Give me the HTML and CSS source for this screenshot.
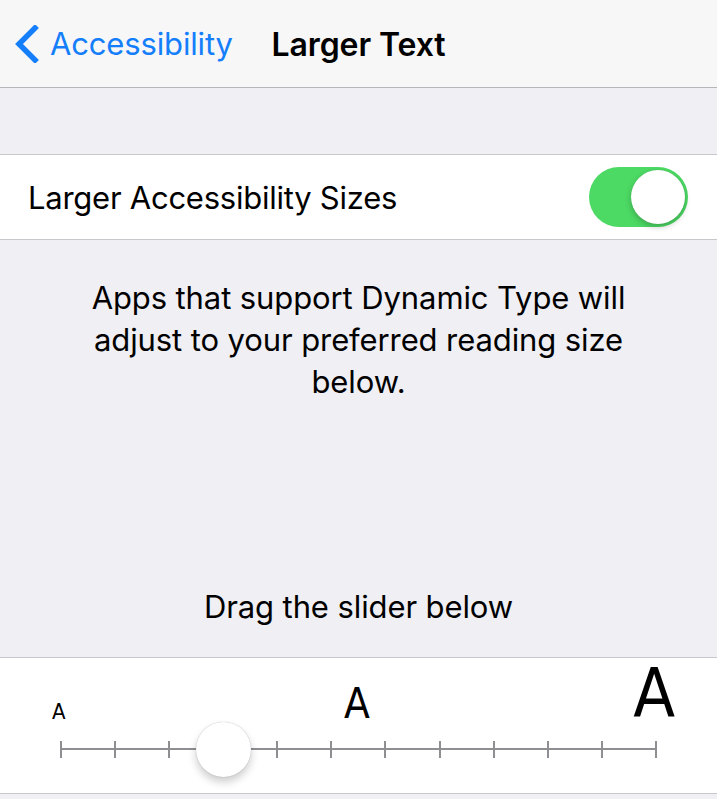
FILE: index.html
```html
<!DOCTYPE html>
<html lang="en">
<head>
<meta charset="utf-8">
<title>Larger Text</title>
<link rel="stylesheet" href="styles.css">
</head>
<body>
<header class="navbar">
  <a class="back" href="#">
    <svg class="chevron" width="26" height="38" viewBox="0 0 26 38"><path d="M22 3 L6 19 L22 35" fill="none" stroke="#157efb" stroke-width="5.5" stroke-linecap="square" stroke-linejoin="miter"/></svg>
    <span>Accessibility</span>
  </a>
  <h1 class="title">Larger Text</h1>
</header>

<div class="spacer"></div>

<section class="group">
  <div class="row">
    <span class="row-label">Larger Accessibility Sizes</span>
    <div class="switch on"><div class="knob"></div></div>
  </div>
</section>

<p class="note">Apps that support Dynamic Type will adjust to your preferred reading size below.</p>

<p class="hint">Drag the slider below</p>

<section class="group slider-group">
  <div class="sizes">
    <span class="a a-small">A</span>
    <span class="a a-mid">A</span>
    <span class="a a-large">A</span>
  </div>
  <div class="track">
    <div class="line"></div>
    <div class="ticks">
      <i></i><i></i><i></i><i></i><i></i><i></i><i></i><i></i><i></i><i></i><i></i><i></i>
    </div>
    <div class="thumb" style="left: 27.27%"></div>
  </div>
</section>
</body>
</html>
```
FILE: styles.css
```css
* { box-sizing: border-box; }

html, body {
  margin: 0;
  padding: 0;
  background: #efeff4;
  font-family: "Inter", "Roboto", "Noto Sans", sans-serif;
  color: #000;
  -webkit-font-smoothing: antialiased;
}

/* top navigation bar */
.navbar {
  height: 88px;
  background: #f7f7f8;
  border-bottom: 1px solid #b6b6ba;
  display: flex;
  align-items: center;
  position: relative;
}

.back {
  display: flex;
  align-items: center;
  gap: 11px;
  padding-left: 13px;
  color: #157efb;
  text-decoration: none;
  font-size: 31px;
  letter-spacing: -0.15px;
}

.chevron { display: block; }

.title {
  position: absolute;
  left: 0;
  right: 0;
  top: 0;
  height: 88px;
  margin: 0;
  display: flex;
  align-items: center;
  justify-content: center;
  font-size: 32px;
  font-weight: 600;
  letter-spacing: -0.1px;
  pointer-events: none;
}

.spacer { height: 66px; }

/* grouped white cells */
.group {
  background: #fff;
  border-top: 1px solid #c8c7cc;
  border-bottom: 1px solid #c8c7cc;
}

.row {
  height: 84px;
  display: flex;
  align-items: center;
  justify-content: space-between;
  padding: 0 29px 0 28px;
}

.row-label {
  font-size: 31px;
  letter-spacing: -0.25px;
}

.switch {
  width: 99px;
  height: 60px;
  border-radius: 30px;
  background: #4cd964;
  position: relative;
}

.knob {
  position: absolute;
  top: 3px;
  right: 3px;
  width: 54px;
  height: 54px;
  border-radius: 50%;
  background: #fff;
  box-shadow: 0 3px 6px rgba(0, 0, 0, 0.22), 0 0 1px rgba(0, 0, 0, 0.15);
}

.note {
  margin: 0;
  padding: 37px 60px 0;
  text-align: center;
  font-size: 31px;
  line-height: 42px;
  letter-spacing: -0.1px;
}

.hint {
  margin: 0;
  padding: 183px 0 29px;
  text-align: center;
  font-size: 31px;
  line-height: 42px;
  letter-spacing: -0.1px;
}

/* size slider */
.slider-group {
  height: 137px;
  padding: 0 61px;
  position: relative;
}

.sizes {
  display: grid;
  grid-template-columns: 1fr auto 1fr;
  align-items: end;
  height: 72px;
  padding-bottom: 9px;
  margin: 0 -19px 0 -9px;
  line-height: 0.8;
}

.a {
  font-family: "DejaVu Sans Condensed", "DejaVu Sans", sans-serif;
  font-stretch: condensed;
  font-weight: 400;
}

.a-small { font-size: 22px; justify-self: start; }
.a-mid { font-size: 42px; margin-right: 13px; }
.a-large { font-size: 68px; justify-self: end; }

.track {
  position: relative;
  height: 20px;
  margin-top: 9px;
}

.line {
  position: absolute;
  left: 0;
  right: 0;
  top: 9px;
  height: 2px;
  background: #8e8e93;
}

.ticks {
  position: absolute;
  inset: 0;
  display: flex;
  justify-content: space-between;
  margin: 0 -1px;
}

.ticks i {
  display: block;
  width: 2px;
  height: 17px;
  margin-top: 2px;
  background: #8e8e93;
}

.thumb {
  position: absolute;
  top: 10px;
  width: 55px;
  height: 55px;
  margin: -27px 0 0 -27px;
  border-radius: 50%;
  background: #fff;
  box-shadow: 0 5px 9px rgba(0, 0, 0, 0.2), 0 0 1px rgba(0, 0, 0, 0.3);
}
```
